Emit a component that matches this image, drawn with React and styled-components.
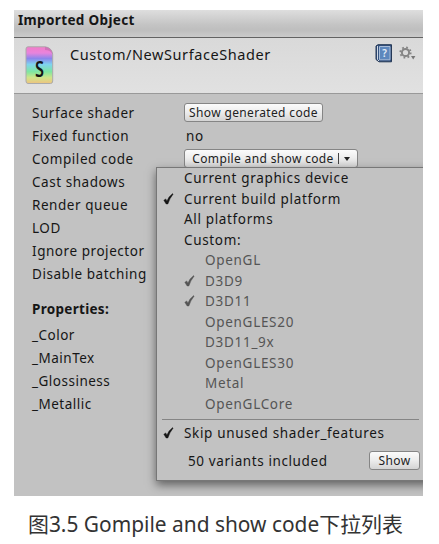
import React from "react";
import styled, { createGlobalStyle } from "styled-components";

const Global = createGlobalStyle`
  * { box-sizing: border-box; }
  body { margin: 0; background: #fff; font-family: "Noto Sans", "Open Sans", sans-serif; color: #161616; }
`;

const Page = styled.main`
  width: 439px;
  height: 544px;
  padding: 10px 0 0 14px;
  overflow: hidden;
`;

const Inspector = styled.section`
  position: relative;
  width: 408.5px;
  height: 486px;
  background: #c2c2c2;
  overflow: hidden;
`;

const TitleBar = styled.header`
  height: 28px;
  padding-left: 4px;
  border-bottom: 1px solid #626262;
  background: linear-gradient(#dedede, #c4c4c4 55%, #bebebe 75%, #cacaca);
  font-size: 13.5px;
  font-weight: 700;
  line-height: 21px;
`;

const AssetBar = styled.div`
  display: flex;
  align-items: flex-start;
  height: 56px;
  padding: 8px 6px 0 11px;
  border-bottom: 1px solid #999;
  background: linear-gradient(#d9d9d9, #e1e1e1);
`;

const AssetName = styled.div`
  flex: 1;
  margin: -4px 0 0 16px;
  font-size: 14.5px;
  line-height: 24px;
`;

const AssetTools = styled.div`
  display: flex;
  gap: 5px;
  margin-top: -2px;
`;

const Text = styled.span`
  letter-spacing: ${(p) => p.$track ?? 0.6}px;
  white-space: nowrap;
`;

const Fields = styled.div`
  padding: 7px 0 0 18px;
`;

const Field = styled.div`
  display: grid;
  grid-template-columns: 152px auto;
  align-items: center;
  justify-content: start;
  height: 23px;
  font-size: 13.5px;
`;

const SectionTitle = styled.h2`
  margin: 14px 0 4px;
  font-size: 13.5px;
  line-height: 20px;
  font-weight: 700;
`;

const Value = styled.span`
  padding-left: 2px;
`;

const Button = styled.button`
  display: flex;
  align-items: center;
  justify-content: center;
  width: ${(p) => p.$width}px;
  height: 19px;
  padding: 0;
  border: 1px solid #858585;
  border-radius: 3px;
  background: linear-gradient(#fbfbfb, #ececec 50%, #d4d4d4);
  color: #222;
  font: 12px "Noto Sans", sans-serif;
  line-height: 16px;
`;

const Menu = styled.div`
  position: absolute;
  left: 142px;
  top: 157px;
  width: 280px;
  height: 314px;
  border: 1.5px solid #777;
  background: #c2c2c2;
  box-shadow: 0 4px 9px rgba(0, 0, 0, 0.5);
  font-size: 13.5px;
`;

const MenuItem = styled.div`
  display: flex;
  align-items: center;
  height: 20.5px;
  padding-left: ${(p) => (p.$nested ? 26 : 5)}px;
  color: ${(p) => (p.$nested ? "#555" : "#161616")};
`;

const CheckSlot = styled.span`
  display: flex;
  flex: none;
  width: 22px;
  padding-left: 1px;
`;

const Separator = styled.div`
  width: 257px;
  height: 1px;
  margin: 5px 0 3px 5px;
  background: #858585;
`;

const MenuFooter = styled.div`
  display: flex;
  justify-content: space-between;
  align-items: center;
  width: 263px;
  height: 20px;
  margin-top: 7px;
  padding-left: 31px;
`;

const Caption = styled.p`
  margin: 14px 0 0 14px;
  color: #333;
  font: 20.9px/28px "Noto Sans", "Noto Sans CJK SC", sans-serif;
  white-space: nowrap;
`;

const Check = () => (
  <svg width="11" height="12" viewBox="0 0 11 12">
    <path d="M.8 7.2 2.8 5.9 3.9 8.1Q5.5 3.6 9.6.6L10.1 1.2Q6.8 5 4.9 11H3.1Z" fill="currentColor" stroke="currentColor" strokeWidth=".4" />
  </svg>
);

const ShaderIcon = () => (
  <svg width="29" height="39" viewBox="0 0 29 39">
    <defs>
      <linearGradient id="rainbow" x1="0" y1="0" x2="0" y2="1">
        <stop offset="0" stopColor="#f37bc8" />
        <stop offset=".17" stopColor="#e884dc" />
        <stop offset=".32" stopColor="#8b86ec" />
        <stop offset=".48" stopColor="#7fd3ef" />
        <stop offset=".68" stopColor="#7fe6a0" />
        <stop offset=".84" stopColor="#d0e48a" />
        <stop offset="1" stopColor="#efc37f" />
      </linearGradient>
    </defs>
    <path d="M3 .8H20Q26.5 1.5 27.7 8V35Q27.7 37.5 25.5 37.5H3Q1 37.5 1 35V3Q1 .8 3 .8Z" fill="url(#rainbow)" stroke="#aaa" strokeWidth="1" />
    <path d="M20 .8Q26.5 1.5 27.7 8 25 4 20 4Z" fill="#c46fb0" opacity=".7" />
    <text x="14.5" y="31" textAnchor="middle" fontFamily="Noto Sans, sans-serif" fontSize="22" fontWeight="600" fill="#151515" textLength="9" lengthAdjust="spacingAndGlyphs">S</text>
  </svg>
);

const HelpIcon = () => (
  <svg width="18" height="19" viewBox="0 0 18 19">
    <path d="M1 2 3 .7H16.5V17.8L4 17.8 1 15.5Z" fill="#32517f" stroke="#263956" />
    <path d="M4.5 2.5H15V15.8H4.5Z" fill="#5d87bd" stroke="#a9bdd8" />
    <path d="M2.5 2V15.5L4 17" fill="none" stroke="#d0d9e6" />
    <text x="9.5" y="13" textAnchor="middle" fontFamily="Noto Sans, sans-serif" fontSize="10" fontWeight="600" fill="#e4edf8">?</text>
  </svg>
);

const GearIcon = () => (
  <svg width="19" height="18" viewBox="0 0 19 18">
    <circle cx="7.5" cy="8.5" r="3.6" fill="none" stroke="#858585" strokeWidth="2" />
    <circle cx="7.5" cy="8.5" r="5.2" fill="none" stroke="#858585" strokeWidth="1.8" strokeDasharray="1.8 2.284" />
    <path d="M13 12H17.4L15.2 15.5Z" fill="#777" />
  </svg>
);

const DropArrow = styled.span`
  margin-left: 5px;
  border: 3px solid transparent;
  border-top: 4px solid #222;
  border-bottom: 0;
`;

const Divider = styled.span`
  width: 1px;
  height: 11px;
  margin-left: 4px;
  background: #444;
`;

const attributes = [
  ["Surface shader", <Button $width={139}><Text $track={0.35}>Show generated code</Text></Button>],
  ["Fixed function", <Value><Text>no</Text></Value>],
  ["Compiled code", <Button $width={174}><Text $track={0.35}>Compile and show code</Text><Divider /><DropArrow /></Button>],
  ["Cast shadows"],
  ["Render queue"],
  ["LOD"],
  ["Ignore projector"],
  ["Disable batching"],
];

const properties = ["_Color", "_MainTex", "_Glossiness", "_Metallic"];

const menuItems = [
  { label: "Current graphics device" },
  { label: "Current build platform", checked: true },
  { label: "All platforms" },
  { label: "Custom:" },
  { label: "OpenGL", nested: true },
  { label: "D3D9", nested: true, checked: true },
  { label: "D3D11", nested: true, checked: true },
  { label: "OpenGLES20", nested: true },
  { label: "D3D11_9x", nested: true },
  { label: "OpenGLES30", nested: true },
  { label: "Metal", nested: true },
  { label: "OpenGLCore", nested: true },
];

function MenuRow({ label, nested, checked }) {
  return (
    <MenuItem $nested={nested}>
      <CheckSlot>{checked && <Check />}</CheckSlot>
      <Text $track={nested ? 0.7 : 0.65}>{label}</Text>
    </MenuItem>
  );
}

export default function App() {
  return (
    <Page>
      <Global />
      <Inspector>
        <TitleBar><Text $track={0.35}>Imported Object</Text></TitleBar>
        <AssetBar>
          <ShaderIcon />
          <AssetName><Text $track={0.57}>Custom/NewSurfaceShader</Text></AssetName>
          <AssetTools><HelpIcon /><GearIcon /></AssetTools>
        </AssetBar>
        <Fields>
          {attributes.map(([label, control]) => (
            <Field key={label}><Text $track={0.55}>{label}</Text>{control}</Field>
          ))}
          <SectionTitle><Text $track={0.3}>Properties:</Text></SectionTitle>
          {properties.map((name) => (
            <Field key={name}><Text $track={0.5}>{name}</Text></Field>
          ))}
        </Fields>
        <Menu>
          {menuItems.map((item) => <MenuRow key={item.label} {...item} />)}
          <Separator />
          <MenuRow label="Skip unused shader_features" checked />
          <MenuFooter>
            <Text>50 variants included</Text>
            <Button $width={51}><Text $track={0.35}>Show</Text></Button>
          </MenuFooter>
        </Menu>
      </Inspector>
      <Caption>图3.5 Gompile and show code下拉列表</Caption>
    </Page>
  );
}
